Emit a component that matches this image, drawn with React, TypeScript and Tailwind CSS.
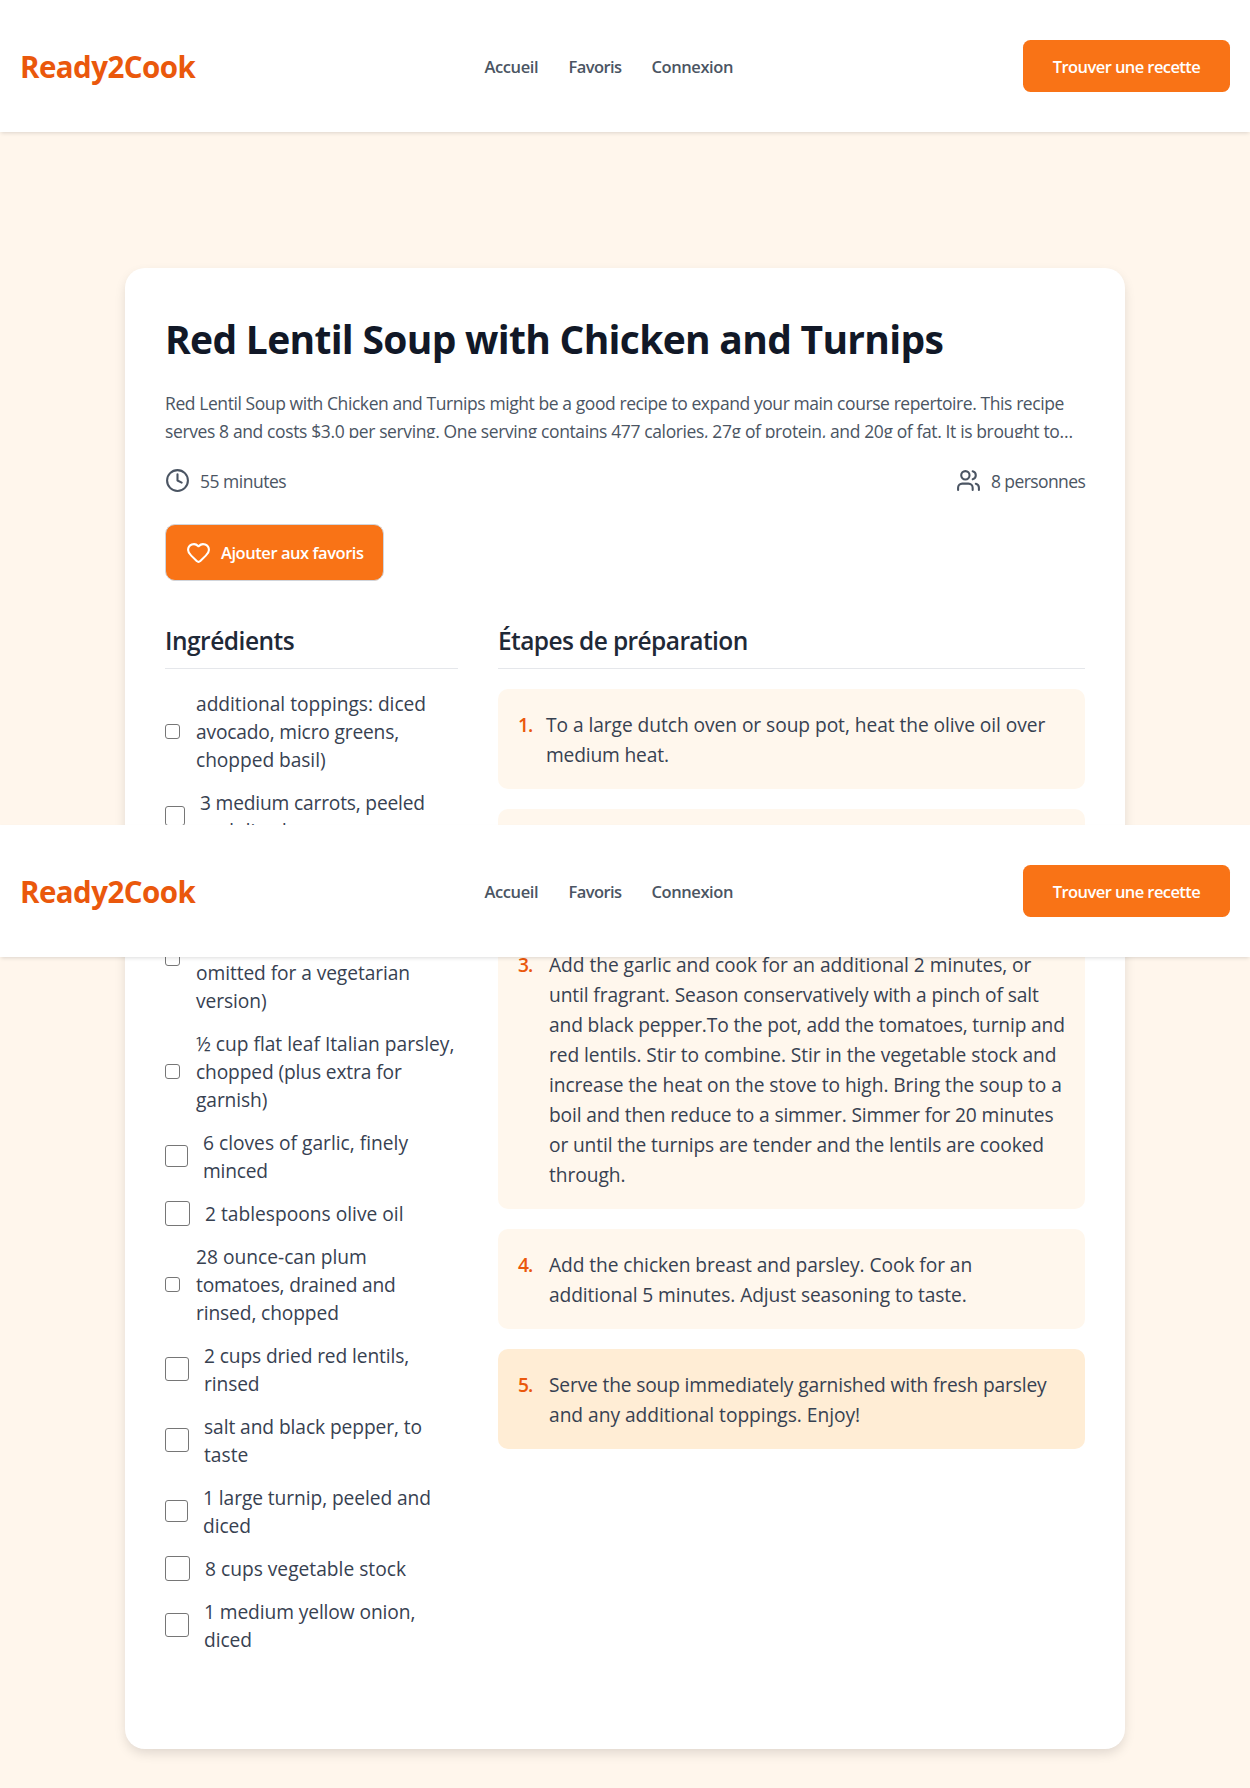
import { Clock, Heart, Users } from "lucide-react";

type Line = [text: string, tracking: string];

type Ingredient = { box: string; gap: string; lines: Line[] };

const BOX_15 = { box: "size-[15px]", gap: "ml-[16px]" };
const BOX_20 = { box: "size-[20px]", gap: "ml-[15px]" };
const BOX_22 = { box: "size-[22.5px]", gap: "ml-[15.5px]" };
const BOX_24 = { box: "size-[24px]", gap: "ml-[15px]" };
const BOX_25 = { box: "size-[25px]", gap: "ml-[15px]" };

const ingredients: Ingredient[] = [
  {
    ...BOX_15,
    lines: [
      ["additional toppings: diced", "tracking-[-0.03px]"],
      ["avocado, micro greens,", "tracking-[-0.17px]"],
      ["chopped basil)", "tracking-[-0.06px]"],
    ],
  },
  {
    ...BOX_20,
    lines: [
      ["3 medium carrots, peeled", "tracking-[-0.18px]"],
      ["and diced", "tracking-[-0.1px]"],
    ],
  },
  { ...BOX_25, lines: [["2 celery stalks, diced", "tracking-[-0.1px]"]] },
  {
    ...BOX_15,
    lines: [
      ["2 cups cooked chicken", "tracking-[-0.1px]"],
      ["breast, diced (may be", "tracking-[-0.1px]"],
      ["omitted for a vegetarian", "tracking-[-0.08px]"],
      ["version)", "tracking-[-0.08px]"],
    ],
  },
  {
    ...BOX_15,
    lines: [
      ["½ cup flat leaf Italian parsley,", "tracking-[0px]"],
      ["chopped (plus extra for", "tracking-[-0.13px]"],
      ["garnish)", "tracking-[-0.1px]"],
    ],
  },
  {
    ...BOX_22,
    lines: [
      ["6 cloves of garlic, finely", "tracking-[0px]"],
      ["minced", "tracking-[-0.2px]"],
    ],
  },
  { ...BOX_25, lines: [["2 tablespoons olive oil", "tracking-[0px]"]] },
  {
    ...BOX_15,
    lines: [
      ["28 ounce-can plum", "tracking-[0px]"],
      ["tomatoes, drained and", "tracking-[-0.19px]"],
      ["rinsed, chopped", "tracking-[-0.12px]"],
    ],
  },
  {
    ...BOX_24,
    lines: [
      ["2 cups dried red lentils,", "tracking-[-0.12px]"],
      ["rinsed", "tracking-[-0.1px]"],
    ],
  },
  {
    ...BOX_24,
    lines: [
      ["salt and black pepper, to", "tracking-[-0.08px]"],
      ["taste", "tracking-[0px]"],
    ],
  },
  {
    ...BOX_22,
    lines: [
      ["1 large turnip, peeled and", "tracking-[-0.08px]"],
      ["diced", "tracking-[-0.1px]"],
    ],
  },
  { ...BOX_25, lines: [["8 cups vegetable stock", "tracking-[0px]"]] },
  {
    ...BOX_24,
    lines: [
      ["1 medium yellow onion,", "tracking-[-0.1px]"],
      ["diced", "tracking-[-0.1px]"],
    ],
  },
];

const steps: { number: string; indent: string; bg: string; lines: Line[] }[] = [
  {
    number: "1.",
    indent: "w-[28px]",
    bg: "bg-[#fff7ed]",
    lines: [
      ["To a large dutch oven or soup pot, heat the olive oil over", "tracking-[-0.06px]"],
      ["medium heat.", "tracking-[-0.16px]"],
    ],
  },
  { number: "", indent: "w-[31px]", bg: "bg-[#fff7ed]", lines: [] },
  {
    number: "3.",
    indent: "w-[31px]",
    bg: "bg-[#fff7ed]",
    lines: [
      ["Add the garlic and cook for an additional 2 minutes, or", "tracking-[-0.05px]"],
      ["until fragrant. Season conservatively with a pinch of salt", "tracking-[-0.12px]"],
      ["and black pepper.To the pot, add the tomatoes, turnip and", "tracking-[-0.15px]"],
      ["red lentils. Stir to combine. Stir in the vegetable stock and", "tracking-[-0.09px]"],
      ["increase the heat on the stove to high. Bring the soup to a", "tracking-[-0.07px]"],
      ["boil and then reduce to a simmer. Simmer for 20 minutes", "tracking-[-0.15px]"],
      ["or until the turnips are tender and the lentils are cooked", "tracking-[-0.13px]"],
      ["through.", "tracking-[-0.06px]"],
    ],
  },
  {
    number: "4.",
    indent: "w-[31px]",
    bg: "bg-[#fff7ed]",
    lines: [
      ["Add the chicken breast and parsley. Cook for an", "tracking-[-0.08px]"],
      ["additional 5 minutes. Adjust seasoning to taste.", "tracking-[-0.1px]"],
    ],
  },
  {
    number: "5.",
    indent: "w-[31px]",
    bg: "bg-[#ffedd5]",
    lines: [
      ["Serve the soup immediately garnished with fresh parsley", "tracking-[-0.16px]"],
      ["and any additional toppings. Enjoy!", "tracking-[-0.03px]"],
    ],
  },
];

function Header() {
  return (
    <header className="flex h-[132px] w-full items-center justify-between bg-white px-5 shadow-[0_2px_4px_-1px_rgba(0,0,0,0.14)]">
      <a className="w-[175px] whitespace-nowrap pt-[2px] text-[29.5px] font-bold tracking-[-0.55px] text-[#ea580c]">
        Ready2Cook
      </a>
      <nav className="flex gap-[30px] whitespace-nowrap pt-[3px] text-[16.5px] font-semibold text-[#4b5563]">
        <a className="w-[54px] tracking-[-0.4px]">Accueil</a>
        <a className="w-[53px] tracking-[-0.57px]">Favoris</a>
        <a className="w-[82px] tracking-[-0.42px]">Connexion</a>
      </nav>
      <button className="h-[52px] w-[207px] whitespace-nowrap rounded-[7.5px] bg-[#f97316] pt-[2px] text-[16.5px] font-semibold tracking-[-0.58px] text-white">
        Trouver une recette
      </button>
    </header>
  );
}

function SectionTitle({ text, tracking }: { text: string; tracking: string }) {
  return (
    <h2 className={`mb-5 h-12 border-b border-[#e5e7eb] text-[24.5px] font-semibold leading-[39px] text-[#1f2937] ${tracking}`}>
      {text}
    </h2>
  );
}

export default function App() {
  return (
    <div className="relative h-[1788px] w-full overflow-hidden bg-[#fff6ec] font-['Open_Sans',sans-serif]">
      <Header />

      <main className="mx-auto mt-[136px] h-[1481px] w-[1000px] rounded-[20px] bg-white p-10 shadow-[0_5px_12px_-1px_rgba(0,0,0,0.13)]">
        <h1 className="whitespace-nowrap text-[39px] font-bold leading-[62px] tracking-[-0.7px] text-[#111827]">
          Red Lentil Soup with Chicken and Turnips
        </h1>

        <div className="mt-[18px] h-[50px] overflow-hidden whitespace-nowrap text-[17.5px] leading-7 text-[#4b5563]">
          <p className="relative top-px tracking-[-0.42px]">
            Red Lentil Soup with Chicken and Turnips might be a good recipe to expand your main course repertoire. This recipe
          </p>
          <p className="relative top-px tracking-[-0.38px]">
            serves 8 and costs $3.0 per serving. One serving contains 477 calories, 27g of protein, and 20g of fat. It is brought to…
          </p>
        </div>

        <div className="mt-[30px] flex h-[25px] items-center justify-between text-[17.5px] text-[#4b5563]">
          <div className="flex items-center gap-[10px]">
            <Clock size={25} />
            <span className="pt-[2px] tracking-[-0.5px]">55 minutes</span>
          </div>
          <div className="flex items-center gap-[10px]">
            <Users size={25} />
            <span className="w-[94px] whitespace-nowrap pt-[2px] tracking-[-0.6px]">8 personnes</span>
          </div>
        </div>

        <button className="mt-[31px] flex h-[57px] w-[219px] items-center gap-[10px] whitespace-nowrap rounded-[10px] border border-[#d1d5db] bg-[#f97316] pl-5 text-white">
          <Heart size={25} className="shrink-0" />
          <span className="pt-px text-[16.5px] font-semibold tracking-[-0.45px]">Ajouter aux favoris</span>
        </button>

        <div className="mt-10 grid grid-cols-[293px_587px] gap-10">
          <section>
            <SectionTitle text="Ingrédients" tracking="tracking-[-0.5px]" />
            <ul className="flex flex-col gap-[15px]">
              {ingredients.map((item) => (
                <li key={item.lines[0][0]} className="flex items-center">
                  <input
                    type="checkbox"
                    className={`shrink-0 appearance-none rounded-[3px] border border-[#767676] bg-white ${item.box}`}
                  />
                  <div className={`whitespace-nowrap text-[19.2px] leading-7 text-[#374151] ${item.gap}`}>
                    {item.lines.map(([text, tracking]) => (
                      <p key={text} className={`relative top-px ${tracking}`}>
                        {text}
                      </p>
                    ))}
                  </div>
                </li>
              ))}
            </ul>
          </section>

          <section>
            <SectionTitle text="Étapes de préparation" tracking="tracking-[-0.6px]" />
            <ol className="flex flex-col gap-5">
              {steps.map((step, index) => (
                <li
                  key={index}
                  className={`flex min-h-[100px] rounded-[10px] p-5 text-[19.2px] leading-[30px] ${step.bg}`}
                >
                  <span className={`relative top-px shrink-0 font-semibold tracking-[-0.9px] text-[#ea580c] ${step.indent}`}>
                    {step.number}
                  </span>
                  <div className="whitespace-nowrap text-[#374151]">
                    {step.lines.map(([text, tracking]) => (
                      <p key={text} className={`relative top-px ${tracking}`}>
                        {text}
                      </p>
                    ))}
                  </div>
                </li>
              ))}
            </ol>
          </section>
        </div>
      </main>

      <div className="absolute inset-x-0 top-[825px] z-10">
        <Header />
      </div>
    </div>
  );
}
